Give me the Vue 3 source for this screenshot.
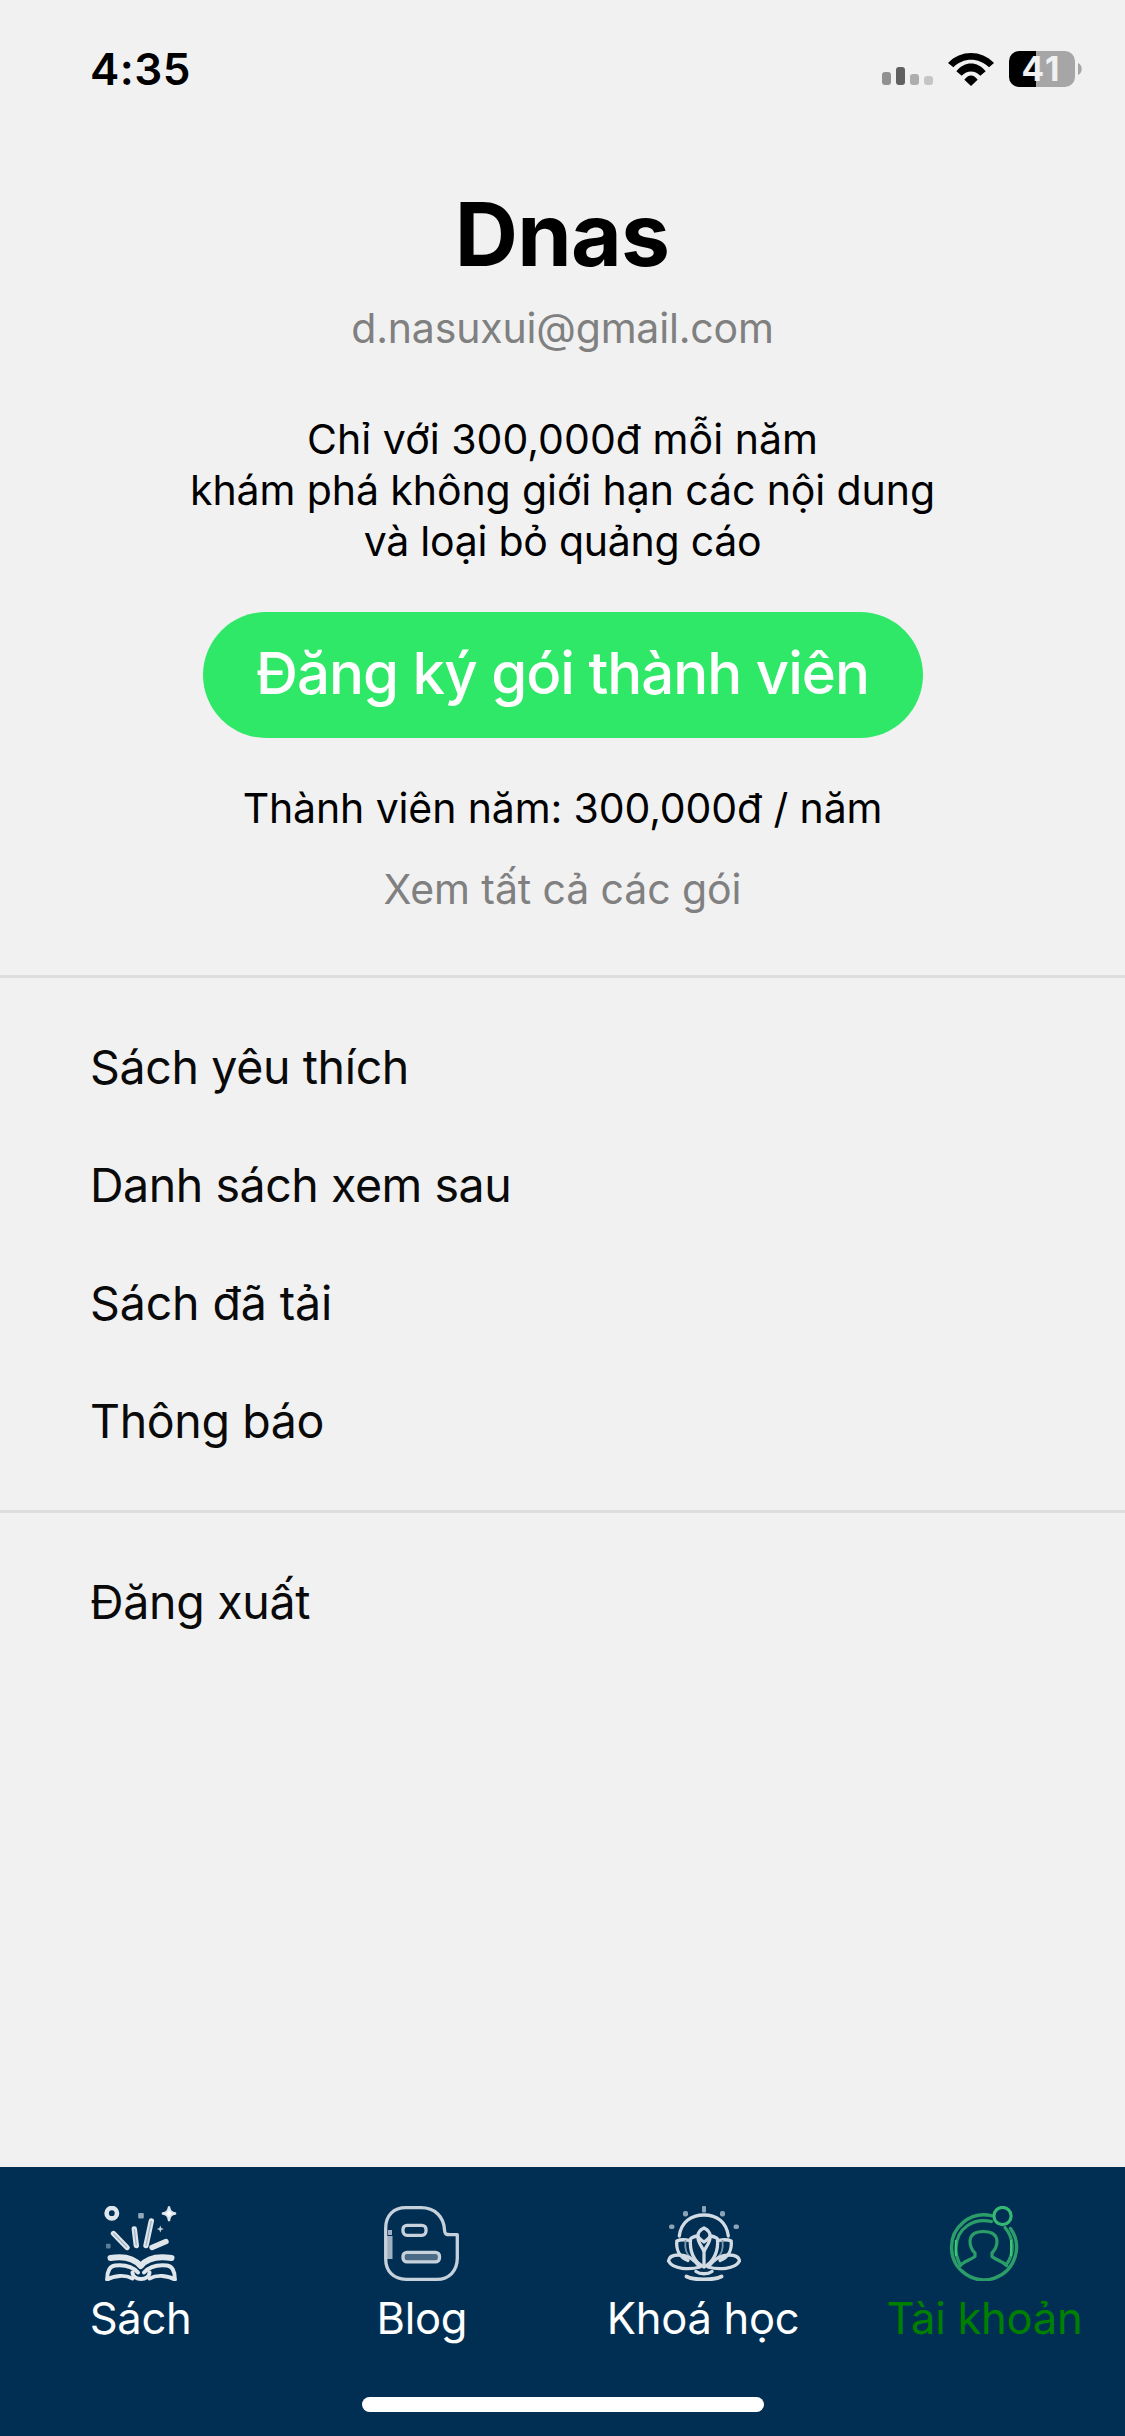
<script setup>
const pitch = [
  { text: 'Chỉ với 300,000đ mỗi năm', spacing: '0.04px' },
  { text: 'khám phá không giới hạn các nội dung', spacing: '-0.09px' },
  { text: 'và loại bỏ quảng cáo', spacing: '-0.25px' }
]
const library = [
  { text: 'Sách yêu thích', spacing: '-0.36px' },
  { text: 'Danh sách xem sau', spacing: '-0.45px' },
  { text: 'Sách đã tải', spacing: '-0.13px' },
  { text: 'Thông báo', spacing: '-0.37px' }
]
const session = [{ text: 'Đăng xuất', spacing: '-0.3px' }]
const bars = [
  { h: 13, color: '#919191' },
  { h: 18, color: '#606060' },
  { h: 11, color: '#adadad' },
  { h: 9, color: '#c5c5c5' }
]
const tabs = [
  { id: 'books', label: 'Sách' },
  { id: 'blog', label: 'Blog' },
  { id: 'courses', label: 'Khoá học' },
  { id: 'account', label: 'Tài khoản', active: true }
]
</script>

<template>
  <div class="screen">
    <header class="status">
      <span class="clock">4:35</span>
      <div class="indicators">
        <div class="signal">
          <i v-for="b in bars" :key="b.h" :style="{ height: b.h + 'px', background: b.color }"></i>
        </div>
        <svg class="wifi" viewBox="264 66 138 99" preserveAspectRatio="none">
          <path d="M264 96C302 56 364 56 402 96L387 109C356 79 310 79 280 109Z" />
          <path d="M289 121C314 90 352 90 377 121L361 134C345 117 321 117 305 134Z" />
          <path d="M313 146C325 129 341 129 353 146L333 165Z" />
        </svg>
        <div class="battery"><span>41</span></div>
        <svg class="nub" viewBox="0 0 4 12"><path d="M0 0C5 2 5 10 0 12Z" fill="#a6a6a6" /></svg>
      </div>
    </header>

    <section class="profile">
      <h1>Dnas</h1>
      <p class="email">d.nasuxui@gmail.com</p>
      <div class="pitch">
        <p v-for="l in pitch" :key="l.text" :style="{ letterSpacing: l.spacing }">{{ l.text }}</p>
      </div>
      <button class="subscribe">Đăng ký gói thành viên</button>
      <p class="plan">Thành viên năm: 300,000đ / năm</p>
      <a class="all-plans">Xem tất cả các gói</a>
    </section>

    <nav class="menu">
      <a v-for="m in library" :key="m.text" :style="{ letterSpacing: m.spacing }">{{ m.text }}</a>
    </nav>
    <nav class="menu">
      <a v-for="m in session" :key="m.text" :style="{ letterSpacing: m.spacing }">{{ m.text }}</a>
    </nav>

    <footer class="tabbar">
      <div class="tabs">
        <a v-for="t in tabs" :key="t.id" class="tab" :class="{ active: t.active }">
          <svg v-if="t.id === 'books'" class="icon" viewBox="-2 0 75 75">
            <g fill="none" stroke="#dfe6ec" stroke-linecap="round" stroke-linejoin="round">
              <circle cx="6.800" cy="7.200" r="5.200" stroke-width="4.600" />
              <path d="M8.500 27.500L22 41.500M29.300 23L31.300 39.500M46.300 15L41 39.500M61 35.500L47 41.500" stroke-width="5.400" />
              <path d="M5.500 52C17 50 28 51 35.700 60C43 51 54 50 66.500 52" stroke-width="6" />
              <path d="M2.300 73.500C2 65 5 60 10 59.500C19 58.500 28 61 33 66.500M69.700 73.500C70 65 67 60 62 59.500C53 58.500 44 61 39 66.500" stroke-width="4" />
              <path d="M2.300 73.500C9 69.500 20 68.500 27.500 72.500M69.700 73.500C63 69.500 52 68.500 44.500 72.500" stroke-width="3.800" />
              <path d="M27.500 66.500C28 75 44 75 44.500 66.500" stroke-width="4" />
            </g>
            <path d="M8.500 27.500L22 41.500M46.300 15L41 39.500M29.300 23L31.300 39.500" stroke="#9fb2c3" stroke-width="1.200" fill="none" />
            <path d="M64 .5C65 5.500 66 6.500 71 7.500C66 8.500 65 9.500 64 15C63 9.500 62 8.500 57 7.500C62 6.500 63 5.500 64 .5Z" fill="#fff" stroke="#dfe6ec" stroke-width="2" />
            <path d="M55.300 19.500L56.300 22L58.800 23L56.300 24L55.300 26.500L54.300 24L51.800 23L54.300 22Z" fill="#c3d1dc" />
            <rect x="33.200" y="7" width="5.600" height="5.600" rx="1" fill="#91a8ba" />
            <rect x="1" y="37.800" width="4.600" height="4.600" rx="1" fill="#5d7c96" />
          </svg>

          <svg v-else-if="t.id === 'blog'" class="icon" viewBox="0 0 75 75">
            <rect x="1.500" y="30" width="7" height="23" fill="#9fb1c1" />
            <g fill="none" stroke="#c6d1db" stroke-width="3.300" stroke-linejoin="round">
              <path d="M22 1.700H37C51 1.700 60 11 60.500 24C60.700 28 62 28.700 66 28.700H73.300V52C73.300 65 65 73.300 53 73.300H22C9.500 73.300 1.700 65 1.700 53V22C1.700 9.500 9.500 1.700 22 1.700Z" />
              <rect x="19" y="19.300" width="23" height="10" rx="4" />
              <rect x="19" y="46.300" width="36.500" height="9.600" rx="4" fill="#4b6b86" />
            </g>
            <path d="M6 24V29" stroke="#9fb1c1" stroke-width="4" />
          </svg>

          <svg v-else-if="t.id === 'courses'" class="icon" viewBox="0 0 75 75">
            <g fill="none" stroke="#d3dce4" stroke-width="3.300" stroke-linecap="round" stroke-linejoin="round">
              <path d="M13.300 30C15 16 25 9 38 9C51 9 60.500 16 62.300 30" />
              <path d="M38 22C42 24 44 26.500 44 29.500C44 32 41 34 38 36C35 34 32 32 32 29.500C32 26.500 34 24 38 22Z" />
              <path d="M31.500 30C28 30.500 25.500 31.500 24.500 33C23.500 44 27 56 38 61C48.500 56 52.500 44 51.500 33C50.500 31.500 48 30.500 44.500 30" />
              <path d="M32 31C31.500 37 37 41 38 46V60M44 31C44.500 37 39 41 38 46" />
              <path d="M24 34.500C19 33.500 14 33.500 10.800 35C10 43 13 51 22 54.500M52 34.500C57 33.500 62 33.500 65.200 35C66 43 63 51 54 54.500" />
              <path d="M19.500 35C18.500 42 20 48 25 52M56.500 35C57.500 42 56 48 51 52" stroke-width="1.800" stroke="#7f98ad" />
              <path d="M12.500 49C7 49 3 51 2.500 55C7 63.500 24 64 34 61C28 53 20 49 12.500 49M63.500 49C69 49 73 51 73.500 55C69 63.500 52 64 42 61C48 53 56 49 63.500 49" />
              <path d="M30 65.500C34 68.500 42 68.500 46 65.500" stroke-width="3.400" />
              <path d="M20.500 70.500C28 74.500 48 74.500 55.500 70.500" stroke-width="3.800" />
            </g>
            <g fill="#8ba3b7">
              <rect x="36" y="0" width="4" height="6.500" rx="1" />
              <rect x="17" y="5" width="5" height="5.500" rx="2" />
              <rect x="54" y="5" width="5" height="5.500" rx="2" />
              <rect x="3" y="18.500" width="5.500" height="4.500" rx="2" />
              <rect x="67.500" y="18.500" width="5.500" height="4.500" rx="2" />
            </g>
          </svg>

          <svg v-else class="icon" viewBox="1.500 0 75 75">
            <g fill="none" stroke="#2a9d68" stroke-width="3.200" stroke-linecap="round" stroke-linejoin="round">
              <path d="M46 9.700A32.500 32.500 0 1 0 65 22.500" stroke-width="3.400" />
              <path d="M46 15.500C28 11.500 11 22 10.500 42C10.300 48 12 54 15 59M59.500 21.500C69 33 69 48 60.500 59" />
              <circle cx="57" cy="10" r="8.600" stroke="#35b873" stroke-width="3.200" />
              <path d="M15 59.500C18 55 24 54.500 29.500 50.500V47C25 43 24.500 39 24.500 35C25 28 30.500 25.500 37.700 25.500C45 25.500 51 28 51.500 35C51.500 39 50.500 43 46.500 47V50.500C51 54.500 57 55 61 59.500" />
            </g>
            <path d="M10.300 34V50M65.500 34V50" stroke="#3ccf78" stroke-width="1.800" />
          </svg>
          <span>{{ t.label }}</span>
        </a>
      </div>
      <div class="home-bar"></div>
    </footer>
  </div>
</template>

<style>
body { background: #f1f1f1; }
</style>

<style scoped>
.screen {
  width: 1125px;
  height: 2436px;
  display: flex;
  flex-direction: column;
  overflow: hidden;
  background: #f1f1f1;
  color: #000;
  font-family: Inter, "Noto Sans", sans-serif;
}
h1, p { margin: 0; }

.status {
  height: 181px;
  flex: none;
  box-sizing: border-box;
  display: flex;
  justify-content: space-between;
  align-items: flex-start;
  padding: 42px 43px 0 90px;
}
.clock { font-size: 44px; line-height: 54px; font-weight: 600; letter-spacing: 0.46px; }
.indicators { display: flex; align-items: center; height: 54px; }
.signal { display: flex; align-items: flex-end; gap: 5px; height: 18px; margin: 14px 15px 0 0; }
.signal i { width: 9px; border-radius: 3px; }
.wifi { width: 46px; height: 33px; margin-right: 15px; }
.battery {
  width: 66px;
  height: 36px;
  box-sizing: border-box;
  padding-right: 1px;
  border-radius: 10px;
  background: linear-gradient(90deg, #000 27px, #a6a6a6 27px);
  color: #f1f1f1;
  font-size: 33.5px;
  line-height: 37px;
  font-weight: 700;
  letter-spacing: 2px;
  text-align: center;
}
.nub { width: 4px; height: 12px; margin-left: 3px; }

.profile {
  height: 794px;
  flex: none;
  display: flex;
  flex-direction: column;
  align-items: center;
  text-align: center;
  font-size: 41px;
  line-height: 51px;
}
h1 {
  margin-right: 1px;
  font-size: 87.5px;
  line-height: 106px;
  font-weight: 700;
  letter-spacing: -0.7px;
}
.email { margin-top: 16px; color: #808080; letter-spacing: -0.18px; }
.pitch { margin-top: 60px; }
.subscribe {
  width: 720px;
  height: 126px;
  margin-top: 45px;
  padding: 0 0 4px;
  border: 0;
  border-radius: 63px;
  background: #30e868;
  color: #fff;
  font: 500 58.2px/72px Inter, "Noto Sans", sans-serif;
  letter-spacing: -1.02px;
  white-space: nowrap;
}
.plan { margin-top: 45px; letter-spacing: -0.12px; }
.all-plans { margin-top: 30px; color: #808080; letter-spacing: -0.1px; }

.menu {
  flex: none;
  display: flex;
  flex-direction: column;
  padding: 30px 90px;
  border-top: 3px solid #dedede;
  color: #0a0a0a;
  font-size: 46.5px;
  line-height: 118px;
}

.tabbar {
  height: 269px;
  box-sizing: border-box;
  margin-top: auto;
  padding-top: 39px;
  background: #002f53;
  display: flex;
  flex-direction: column;
  align-items: center;
}
.tabs { width: 100%; display: flex; }
.tab {
  flex: 1 1 0;
  display: flex;
  flex-direction: column;
  align-items: center;
  color: #fff;
  font-size: 43.5px;
  line-height: 54px;
  letter-spacing: -0.27px;
}
.tab.active { color: #008000; }
.icon { width: 75px; height: 75px; margin-bottom: 10px; }
.home-bar { width: 402px; height: 15px; margin-top: 52px; border-radius: 8px; background: #fff; }
</style>
